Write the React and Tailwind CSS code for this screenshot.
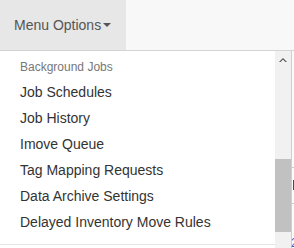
export default function App() {
  const items = [
    "Job Schedules",
    "Job History",
    "Imove Queue",
    "Tag Mapping Requests",
    "Data Archive Settings",
    "Delayed Inventory Move Rules",
  ];
  return (
    <div className="w-[294px] h-[248px] overflow-hidden bg-white flex flex-col" style={{ fontFamily: '"Liberation Sans", Arial, sans-serif' }}>
      <div className="h-[51px] shrink-0 bg-[#f8f8f8] border-b border-[#d4d4d4] flex">
        <div className="h-[50px] bg-[#e7e7e7] px-[14px] pt-[15px] text-[14px] leading-[20px] text-[#555] flex items-start w-[126px]">
          <span>Menu Options</span>
          <span className="ml-[2px] mt-[8px] w-0 h-0 border-t-[4px] border-t-[#555] border-x-[4px] border-x-transparent"></span>
        </div>
      </div>
      <div className="flex flex-1 min-h-0">
        <div className="w-[275px] shrink-0 flex flex-col">
          <div className="bg-white border-b border-[#e5e5e5] pt-[5px] pb-[9px]">
            <div className="px-[20px] py-[3px] text-[12px] leading-[17px] text-[#777]">Background Jobs</div>
            {items.map((t) => (
              <div key={t} className="px-[20px] py-[3px] text-[14px] leading-[20px] text-[#333] whitespace-nowrap">{t}</div>
            ))}
          </div>
        </div>
        <div className="w-[16px] shrink-0 bg-[#f1f1f1] flex flex-col">
          <div className="h-[17px] flex items-center justify-center">
            <svg width="8" height="5" viewBox="0 0 8 5"><path d="M0 5 L4 1 L8 5 L6.5 5 L4 2.5 L1.5 5Z" fill="#505050" /></svg>
          </div>
          <div className="mt-[91px] h-[73px] bg-[#c1c1c1]"></div>
        </div>
        <div className="flex-1 border-l border-[#cfcfcf] bg-[#fbfbfb] flex flex-col relative">
          <div className="mt-[116px] border-t border-[#ccc]"></div>
          <div className="mt-[12px] ml-[1px] w-[2px] h-[10px] bg-[#8a3020]"></div>
          <div className="mt-[13px] border-t border-[#ccc]"></div>
          <div className="mt-[34px] text-[12px] leading-[10px] text-[#2a6ac0] -ml-[1px]">2</div>
        </div>
      </div>
    </div>
  );
}
